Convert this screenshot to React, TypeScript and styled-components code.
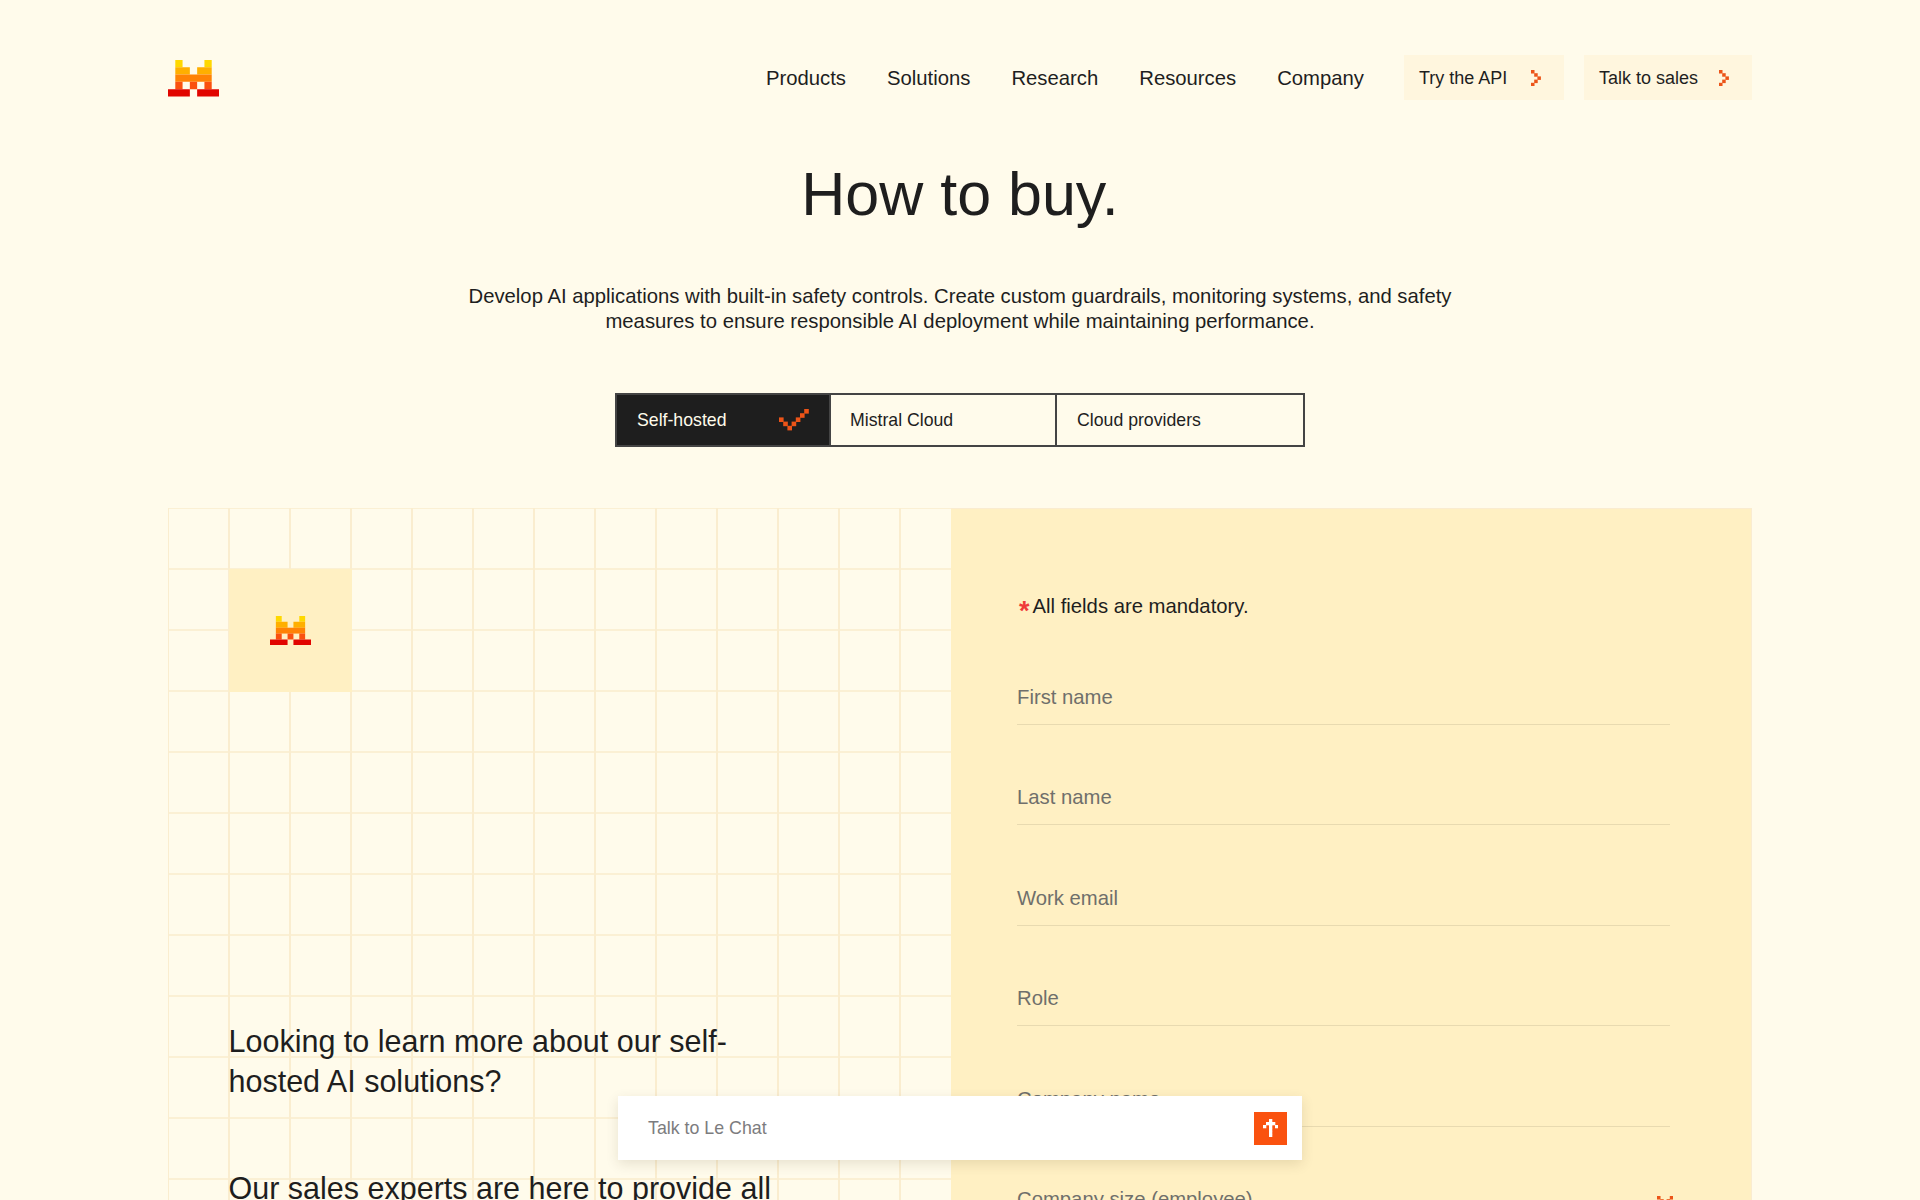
import React from 'react';
import styled, { createGlobalStyle } from 'styled-components';

const Global = createGlobalStyle`
  html, body { margin: 0; padding: 0; background: #fffbeb; }
  body { font-family: "Liberation Sans", Arial, sans-serif; color: #1e1e1e; }
  * { box-sizing: border-box; }
`;

const Page = styled.div`
  position: relative;
  width: 1920px;
  height: 1200px;
  overflow: hidden;
  background: #fffbeb;
  padding: 55px 168px 0;
`;

const Header = styled.header`
  display: flex;
  align-items: center;
  justify-content: space-between;
  height: 45px;
`;

const HeaderLogo = styled.span`
  display: flex;
  margin-top: 2px;
`;

const Nav = styled.nav`
  display: flex;
  align-items: center;
`;

const NavLink = styled.a<{ $mr?: number }>`
  font-size: 20.3px;
  line-height: 24px;
  margin-right: ${(p) => p.$mr ?? 41}px;
  color: #1e1e1e;
`;

const NavButton = styled.a<{ $w: number; $ml?: number }>`
  display: flex;
  align-items: center;
  justify-content: space-between;
  width: ${(p) => p.$w}px;
  height: 45px;
  margin-left: ${(p) => p.$ml ?? 0}px;
  padding: 1px 23px 0 15px;
  background: #fff6de;
  font-size: 18px;
  color: #1e1e1e;
`;

const Title = styled.h1`
  margin: 59px 0 0;
  font-size: 61px;
  line-height: 70px;
  font-weight: 400;
  text-align: center;
`;

const Lead = styled.p`
  margin: 55px 0 0;
  font-size: 20.3px;
  line-height: 24.5px;
  text-align: center;
`;

const Tabs = styled.div`
  display: flex;
  width: 690px;
  height: 54px;
  margin: 60px auto 0;
  border: 2px solid #444;
`;

const Tab = styled.div<{ $w: number; $pl: number; $active?: boolean }>`
  display: flex;
  flex: none;
  align-items: center;
  justify-content: space-between;
  width: ${(p) => p.$w}px;
  padding: 0 20px 0 ${(p) => p.$pl}px;
  font-size: 17.7px;
  color: ${(p) => (p.$active ? '#fffbeb' : '#1e1e1e')};
  background: ${(p) => (p.$active ? '#1e1e1e' : 'transparent')};
  & + & { border-left: 2px solid #444; }
`;

const Columns = styled.section`
  display: flex;
  height: 800px;
  margin-top: 61px;
`;

const LeftPanel = styled.div`
  width: 783px;
  padding: 61px 61px 61px 60.5px;
  background-color: #fffbeb;
  background-image:
    linear-gradient(to right, #faedcf 2px, transparent 2px),
    linear-gradient(to bottom, #fbf0d4 2px, transparent 2px);
  background-size: 61px 61px;
  background-position: -1px -1px;
`;

const LogoTile = styled.div`
  display: flex;
  align-items: center;
  justify-content: center;
  width: 123px;
  height: 123px;
  background: #fff0c3;
`;

const Pitch = styled.p<{ $mt: number }>`
  width: 560px;
  margin: ${(p) => p.$mt}px 0 0;
  font-size: 30.5px;
  line-height: 40px;
`;

const FormPanel = styled.div`
  flex: 1;
  padding: 84px 81px 0 66px;
  background: #fff0c3;
  border-right: 1.5px solid #faecd0;
  border-top: 1px solid #faecd0;
`;

const Mandatory = styled.div`
  display: flex;
  align-items: baseline;
  font-size: 20.3px;
  line-height: 26px;
  margin-bottom: 47px;
`;

const Star = styled.span`
  align-self: flex-start;
  height: 26px;
  margin: 5px 3px 0 2px;
  font-size: 27px;
  font-weight: 700;
  line-height: 26px;
  color: #ef3a3a;
`;

const Field = styled.div`
  position: relative;
  display: flex;
  align-items: center;
  justify-content: space-between;
  height: 54px;
  margin-bottom: 46.4px;
  font-size: 20.3px;
  color: #6f6f6b;
  border-bottom: 1px solid #e8dab0;
`;

const ChevronSlot = styled.span`
  position: absolute;
  right: -3px;
  top: 23px;
  display: flex;
`;

const ChatBar = styled.div`
  position: absolute;
  left: 618px;
  top: 1096px;
  display: flex;
  align-items: center;
  justify-content: space-between;
  width: 684px;
  height: 64px;
  padding: 0 15px 0 30px;
  background: #fff;
  font-size: 17.8px;
  color: #7c7c7e;
  box-shadow: 0 4px 12px rgba(60, 40, 0, 0.12);
`;

const SendButton = styled.button`
  display: flex;
  align-items: center;
  justify-content: center;
  width: 33px;
  height: 33px;
  padding: 0;
  border: 0;
  background: #fa520f;
`;

const Pixels: React.FC<{ w: number; h: number; unit: number; color: string; cells: [number, number][] }> = ({ w, h, unit, color, cells }) => (
  <svg width={(w + 0.1) * unit} height={(h + 0.1) * unit} viewBox={`0 0 ${w + 0.1} ${h + 0.1}`} fill={color}>
    {cells.map(([x, y]) => (
      <rect key={`${x}-${y}`} x={x} y={y} width={1.1} height={1.1} />
    ))}
  </svg>
);

const Chevron = () => (
  <Pixels w={3} h={5} unit={3.2} color="#ec5418" cells={[[0, 0], [1, 1], [2, 2], [1, 3], [0, 4]]} />
);

const Check = () => (
  <Pixels
    w={7}
    h={5}
    unit={4.2}
    color="#ec5418"
    cells={[[0, 2], [1, 3], [2, 4], [3, 3], [4, 2], [5, 1], [6, 0]]}
  />
);

const Arrow = () => (
  <Pixels
    w={5}
    h={6}
    unit={3}
    color="#fff"
    cells={[[2, 0], [1, 1], [3, 1], [0, 2], [4, 2], [2, 1], [2, 2], [2, 3], [2, 4], [2, 5]]}
  />
);

const DownChevron = () => (
  <Pixels w={5} h={3} unit={3.2} color="#ec5418" cells={[[0, 0], [1, 1], [2, 2], [3, 1], [4, 0]]} />
);

const Logo: React.FC<{ width: number }> = ({ width }) => (
  <svg width={width} height={(width * 5) / 7} viewBox="0 0 7 5">
    <path fill="#ffd800" d="M1 0h1v1H1zM5 0h1v1H5z" />
    <path fill="#ffaf00" d="M1 1h2v1H1zM4 1h2v1H4z" />
    <path fill="#ff8205" d="M1 2h5v1H1z" />
    <path fill="#fa500f" d="M1 3h1v1H1zM3 3h1v1H3zM5 3h1v1H5z" />
    <path fill="#e10500" d="M0 4h3v1H0zM4 4h3v1H4z" />
  </svg>
);

export default function App() {
  return (
    <Page>
      <Global />
      <Header>
        <HeaderLogo>
          <Logo width={51} />
        </HeaderLogo>
        <Nav>
          <NavLink>Products</NavLink>
          <NavLink>Solutions</NavLink>
          <NavLink>Research</NavLink>
          <NavLink>Resources</NavLink>
          <NavLink $mr={40}>Company</NavLink>
          <NavButton $w={160}>
            Try the API <Chevron />
          </NavButton>
          <NavButton $w={168} $ml={20}>
            Talk to sales <Chevron />
          </NavButton>
        </Nav>
      </Header>
      <Title>How to buy.</Title>
      <Lead>
        Develop AI applications with built-in safety controls. Create custom guardrails, monitoring systems, and safety
        <br />
        measures to ensure responsible AI deployment while maintaining performance.
      </Lead>
      <Tabs>
        <Tab $w={212} $pl={20} $active>
          Self-hosted <Check />
        </Tab>
        <Tab $w={226} $pl={19}>Mistral Cloud</Tab>
        <Tab $w={248} $pl={20}>Cloud providers</Tab>
      </Tabs>
      <Columns>
        <LeftPanel>
          <LogoTile>
            <Logo width={41} />
          </LogoTile>
          <Pitch $mt={329}>Looking to learn more about our self-hosted AI solutions?</Pitch>
          <Pitch $mt={67}>Our sales experts are here to provide all</Pitch>
        </LeftPanel>
        <FormPanel>
          <Mandatory>
            <Star>*</Star>All fields are mandatory.
          </Mandatory>
          <Field>First name</Field>
          <Field>Last name</Field>
          <Field>Work email</Field>
          <Field>Role</Field>
          <Field>Company name</Field>
          <Field>
            Company size (employee)
            <ChevronSlot>
              <DownChevron />
            </ChevronSlot>
          </Field>
        </FormPanel>
      </Columns>
      <ChatBar>
        Talk to Le Chat
        <SendButton>
          <Arrow />
        </SendButton>
      </ChatBar>
    </Page>
  );
}
